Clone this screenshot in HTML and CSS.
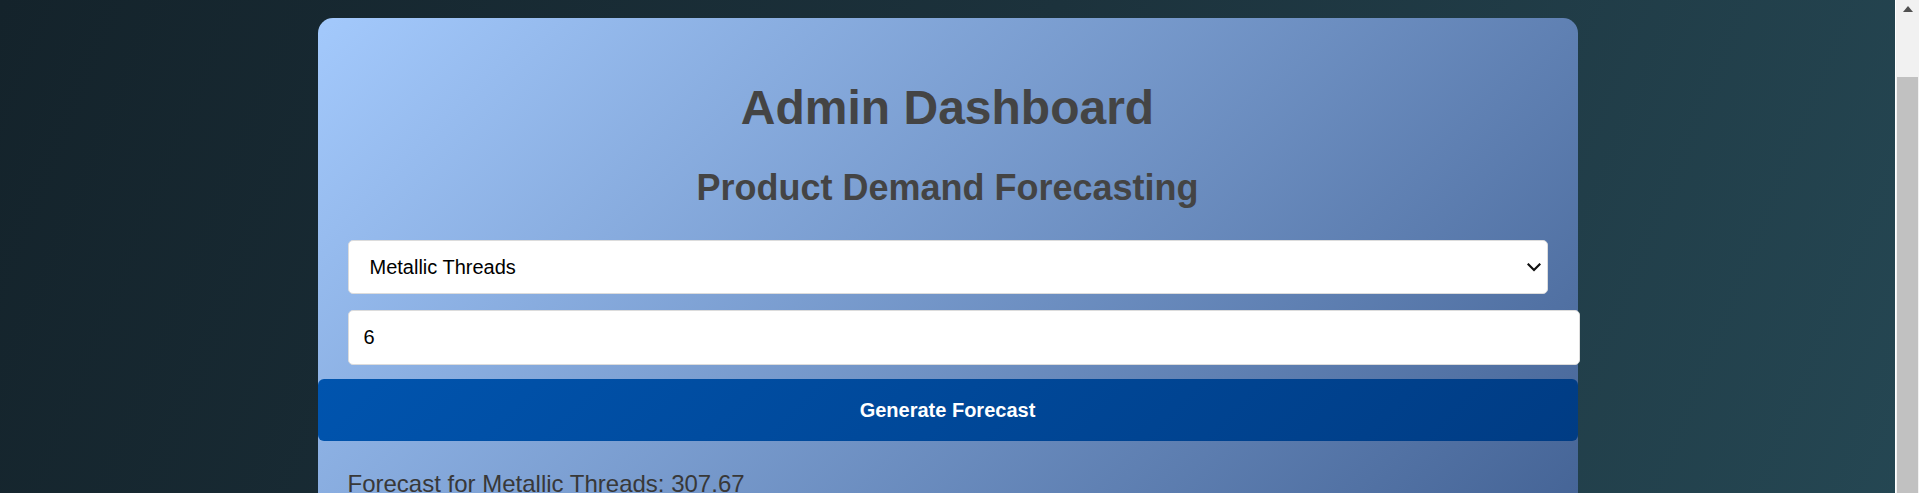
FILE: index.html
```html
<!DOCTYPE html>
<html lang="en">
<head>
<meta charset="utf-8">
<title>Admin Dashboard</title>
<link rel="stylesheet" href="styles.css">
</head>
<body>
<div class="page">
  <main class="card">
    <div class="card-head">
      <h1 class="title">Admin Dashboard</h1>
      <h2 class="subtitle">Product Demand Forecasting</h2>
      <div class="fields">
        <div class="select-wrap">
          <select class="field field-select">
            <option>Metallic Threads</option>
            <option>Cotton Yarn</option>
            <option>Silk Fabric</option>
          </select>
          <svg class="chevron" width="14" height="9" viewBox="0 0 14 9" aria-hidden="true">
            <polyline points="1.5,1.5 7,7 12.5,1.5" fill="none" stroke="#111" stroke-width="2.2" stroke-linecap="square"/>
          </svg>
        </div>
        <input class="field field-input" type="number" value="6">
      </div>
    </div>
    <button class="btn-forecast" type="button">Generate Forecast</button>
    <p class="result">Forecast for Metallic Threads: 307.67</p>
  </main>
</div>
<div class="scrollbar" aria-hidden="true">
  <div class="sb-up"><span class="sb-arrow"></span></div>
  <div class="sb-thumb"></div>
</div>
</body>
</html>
```

FILE: styles.css
```css
html, body {
  height: 100%;
}
body {
  margin: 0;
  display: flex;
  overflow: hidden;
  font-family: "Liberation Sans", Arial, sans-serif;
  color: #444;
  background: linear-gradient(112deg, #14232b 0%, #1c323c 50%, #254753 100%);
}
.page {
  flex: 1;
  min-width: 0;
  overflow: hidden;
}
.scrollbar {
  flex: none;
  width: 24px;
  box-sizing: border-box;
  border-left: 1px solid #ffffff;
  background: #f1f1f1;
  display: flex;
  flex-direction: column;
}
.sb-up {
  height: 77px;
  flex: none;
  display: flex;
  justify-content: center;
  padding-top: 6px;
  box-sizing: border-box;
}
.sb-arrow {
  width: 0;
  height: 0;
  border-left: 5.5px solid transparent;
  border-right: 5.5px solid transparent;
  border-bottom: 6px solid #505050;
}
.sb-thumb {
  flex: 1;
  margin: 0 1px 0 1px;
  background: #c1c1c1;
}
.card {
  width: 1260px;
  margin: 18px auto 0;
  padding: 30px 0 30px;
  box-sizing: border-box;
  border-radius: 15px;
  background: linear-gradient(135deg, #a3c9fc 0%, #446395 100%);
}
.card-head {
  padding: 0 30px;
}
.title {
  margin: 32px 0 32px;
  font-size: 48px;
  font-weight: bold;
  text-align: center;
  line-height: normal;
}
.subtitle {
  margin: 32px 0 31px;
  font-size: 36px;
  font-weight: bold;
  text-align: center;
  line-height: normal;
}
.fields {
  display: flex;
  flex-direction: column;
  align-items: flex-start;
  gap: 16px;
}
.select-wrap {
  position: relative;
  width: 100%;
}
.field {
  font-family: "Liberation Sans", Arial, sans-serif;
  font-size: 20px;
  color: #000;
  background: #fff;
  border: 1px solid #dcdcdc;
  border-radius: 5px;
  padding: 15px;
  margin: 0;
  line-height: normal;
}
.field-select {
  display: block;
  box-sizing: border-box;
  width: 100%;
  -webkit-appearance: none;
  appearance: none;
  padding-left: 21px;
}
.chevron {
  position: absolute;
  right: 7px;
  top: 23px;
}
.field-input {
  box-sizing: content-box;
  width: 100%;
  padding: 15px 15px 15px 15px;
}
.btn-forecast {
  display: block;
  width: 100%;
  height: 62px;
  margin: 14px 0 0;
  padding: 0;
  border: none;
  border-radius: 6px;
  background: linear-gradient(135deg, #0054ae 0%, #003c84 100%);
  color: #fff;
  font-family: "Liberation Sans", Arial, sans-serif;
  font-size: 20px;
  font-weight: bold;
}
.result {
  margin: 29px 0 0;
  padding: 0 30px;
  font-size: 24px;
  color: #383838;
  line-height: normal;
}
```
